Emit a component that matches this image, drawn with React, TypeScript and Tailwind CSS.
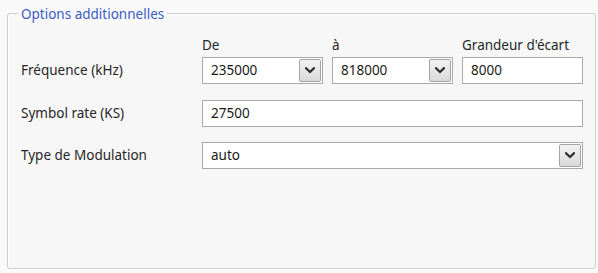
import React from 'react';

const Chevron = () => (
  <svg width="10" height="7" viewBox="0 0 10 7">
    <path d="M1 1.2 L5 5 L9 1.2" fill="none" stroke="#2b2b2b" strokeWidth="2.2" strokeLinecap="square" />
  </svg>
);

const DropButton = () => (
  <div className="flex h-full w-[22px] items-center justify-center rounded-[2px] border border-[#a3a3a3] bg-gradient-to-b from-[#f2f2f2] to-[#d9d9d9]">
    <Chevron />
  </div>
);

const TextBox = ({ value, combo = false }: { value: string; combo?: boolean }) => (
  <div className="flex h-[27px] items-center border border-[#a9a9a9] bg-white pl-[8px] pr-[1px] py-[1px]">
    <span className="flex-1 text-[#1a1a1a]">{value}</span>
    {combo && <DropButton />}
  </div>
);

export default function App() {
  return (
    <div
      className="w-[598px] h-[273px] bg-[#f9f9f9] pt-[13px] pl-[7px] pr-[2px] pb-[4px] text-[13.5px] text-[#262626]"
      style={{ fontFamily: '"Noto Sans", "DejaVu Sans", sans-serif' }}
    >
      <div className="relative h-full rounded-[3px] border border-[#cdcdcd] bg-[#f7f7f7] shadow-[inset_1px_1px_0_#ffffff,1px_1px_0_#ffffff] pl-[13px] pr-[12px] pt-[22px]">
        <span className="absolute -top-[9px] left-[10px] bg-[#f9f9f9] px-[3px] leading-[19px] text-[#3b5cc7]">
          Options additionnelles
        </span>

        <div className="grid grid-cols-[172px_121px_121px_121px] gap-x-[9px]">
          <div />
          <div className="leading-[19px]">De</div>
          <div className="leading-[19px]">à</div>
          <div className="leading-[19px]">Grandeur d'écart</div>

          <div className="mt-[2px] flex items-center">Fréquence (kHz)</div>
          <div className="mt-[2px]">
            <TextBox value="235000" combo />
          </div>
          <div className="mt-[2px]">
            <TextBox value="818000" combo />
          </div>
          <div className="mt-[2px]">
            <TextBox value="8000" />
          </div>

          <div className="mt-[16px] flex items-center">Symbol rate (KS)</div>
          <div className="col-span-3 mt-[16px]">
            <TextBox value="27500" />
          </div>

          <div className="mt-[15px] flex items-center">Type de Modulation</div>
          <div className="col-span-3 mt-[15px]">
            <TextBox value="auto" combo />
          </div>
        </div>
      </div>
    </div>
  );
}
